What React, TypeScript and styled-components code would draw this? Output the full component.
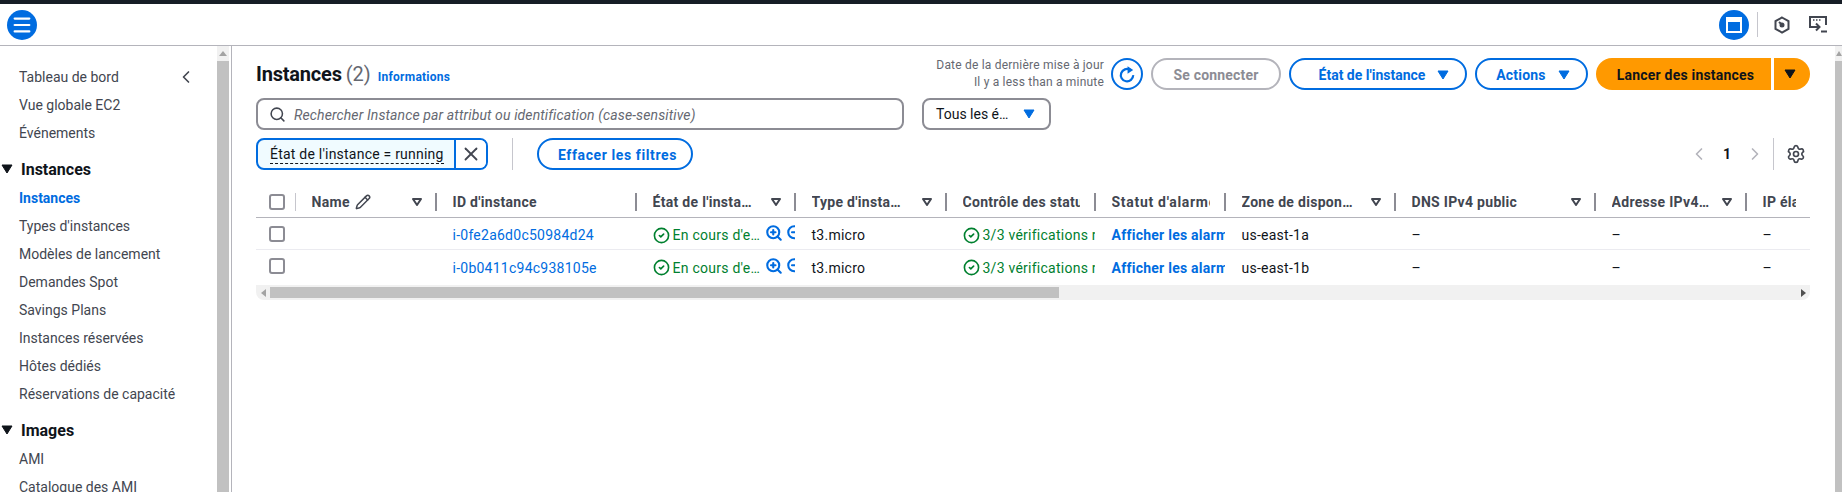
import React from 'react'
import styled, { createGlobalStyle } from 'styled-components'
import { ChevronLeft, ChevronRight, CircleCheck, Menu, Pencil, Search, Settings, X, ZoomIn, ZoomOut } from 'lucide-react'

const BLUE = '#006ce0'
const FONT = 'Roboto, "Noto Sans", sans-serif'
const COLUMNS = '39px 141px 200px 159px 151px 149px 130px 170px 200px 151px 64px'

const GlobalStyle = createGlobalStyle`
  html, body {
    margin: 0;
    height: 100%;
    overflow: hidden;
    background: #fff;
    font-family: ${FONT};
    font-size: 14px;
    color: #0f141a;
  }
  * { box-sizing: border-box; }
`

const Page = styled.div`
  display: flex;
  flex-direction: column;
  height: 100vh;
`

const TopStrip = styled.div`
  height: 4px;
  background: #161d26;
`

const Header = styled.header`
  display: flex;
  align-items: center;
  justify-content: space-between;
  height: 42px;
  padding: 0 15px 0 7px;
  border-bottom: 1px solid #b4b4bb;
`

const RoundButton = styled.div`
  display: flex;
  align-items: center;
  justify-content: center;
  width: 30px;
  height: 30px;
  border-radius: 50%;
  background: ${BLUE};
  color: #fff;
`

const HeaderTools = styled.div`
  display: flex;
  align-items: center;
`

const HeaderDivider = styled.div`
  width: 1px;
  height: 25px;
  margin: 0 16px 0 8px;
  background: #c6c6cd;
`

const ToolIcon = styled.svg`
  display: block;
  margin-right: 19px;
  &:last-child { margin-right: 0; }
`

const Body = styled.div`
  display: flex;
  flex: 1;
  min-height: 0;
`

const Sidebar = styled.nav`
  display: flex;
  flex-direction: column;
  width: 217px;
  padding-top: 17px;
  overflow: hidden;
`

const NavItem = styled.div<{ $active?: boolean }>`
  display: flex;
  align-items: center;
  justify-content: space-between;
  flex: none;
  height: 28px;
  padding: 0 21px 0 19px;
  color: ${p => (p.$active ? BLUE : '#424650')};
  font-weight: ${p => (p.$active ? 700 : 400)};
  white-space: nowrap;
`

const NavSection = styled.div`
  display: flex;
  align-items: center;
  flex: none;
  height: 30px;
  margin-top: 7px;
  padding-left: 1px;
  font-size: 16px;
  font-weight: 700;
  color: #0f141a;
  gap: 8px;
`

const Scrollbar = styled.div<{ $width: number }>`
  display: flex;
  flex-direction: column;
  flex: none;
  width: ${p => p.$width}px;
  background: #f1f1f1;
`

const ScrollCap = styled.div`
  display: flex;
  justify-content: center;
  flex: none;
  height: 15px;
  padding-top: 5px;
`

const ScrollThumb = styled.div`
  flex: 1;
  background: #c1c1c1;
`

const Main = styled.main`
  display: flex;
  flex: 1;
  flex-direction: column;
  min-width: 0;
  margin-left: 2px;
  padding: 12px 25px 0 24px;
  border-left: 1px solid #b4b4bb;
`

const Row = styled.div`
  display: flex;
  align-items: center;
  flex: none;
  height: 32px;
`

const TitleRow = styled(Row)`
  justify-content: space-between;
`

const TitleGroup = styled.div`
  display: flex;
  align-items: baseline;
`

const Title = styled.h1`
  margin: 0;
  font-size: 20px;
  font-weight: 700;
  letter-spacing: -0.2px;
  color: #0f141a;
`

const Count = styled.span`
  margin-left: 4px;
  font-size: 20px;
  color: #656871;
`

const InfoLink = styled.a`
  margin-left: 7px;
  font-size: 12px;
  font-weight: 700;
  letter-spacing: 0.25px;
  color: ${BLUE};
`

const Actions = styled.div`
  display: flex;
  align-items: center;
  gap: 8px;
`

const UpdatedAt = styled.div`
  font-size: 12px;
  line-height: 17px;
  letter-spacing: 0.2px;
  text-align: right;
  color: #656871;
  white-space: nowrap;
`

const Pill = styled.button<{ $disabled?: boolean; $width?: number; $tracking?: number; $inset?: number }>`
  display: flex;
  align-items: center;
  justify-content: center;
  gap: 12px;
  width: ${p => (p.$width ? `${p.$width}px` : 'auto')};
  height: 32px;
  padding: 1px 0 0 ${p => p.$inset ?? 0}px;
  border: 2px solid ${p => (p.$disabled ? '#b4b4bb' : BLUE)};
  border-radius: 16px;
  background: #fff;
  color: ${p => (p.$disabled ? '#8c8c94' : BLUE)};
  font: 700 14px ${FONT};
  letter-spacing: ${p => p.$tracking ?? 0.2}px;
`

const RefreshButton = styled(Pill)`
  width: 32px;
  margin-left: -1px;
  padding: 0;
`

const SplitButton = styled.div`
  display: flex;
  gap: 3px;
`

const PrimaryStart = styled.button`
  width: 175px;
  height: 32px;
  padding: 1px 0 0 4px;
  border: 0;
  border-radius: 16px 0 0 16px;
  background: #ff9900;
  color: #0f141a;
  font: 700 14px ${FONT};
  letter-spacing: 0.2px;
`

const PrimaryEnd = styled(PrimaryStart)`
  display: flex;
  align-items: center;
  justify-content: center;
  width: 36px;
  padding: 0 4px 0 0;
  border-radius: 0 16px 16px 0;
`

const SearchRow = styled(Row)`
  gap: 18px;
  margin-top: 8px;
`

const SearchBox = styled.div`
  display: flex;
  align-items: center;
  gap: 8px;
  width: 648px;
  height: 32px;
  padding-left: 11px;
  border: 2px solid #8c8c94;
  border-radius: 8px;
  color: #424650;
`

const Placeholder = styled.span`
  padding-top: 1px;
  font-style: italic;
  letter-spacing: 0.12px;
  color: #656871;
`

const SelectBox = styled.div`
  display: flex;
  align-items: center;
  justify-content: space-between;
  width: 129px;
  height: 32px;
  padding: 0 14px 0 12px;
  border: 2px solid #8c8c94;
  border-radius: 8px;
`

const FilterRow = styled(Row)`
  margin-top: 8px;
`

const Token = styled.div`
  display: flex;
  align-items: stretch;
  width: 232px;
  height: 32px;
  border: 2px solid ${BLUE};
  border-radius: 8px;
  background: #f0fbff;
  overflow: hidden;
`

const TokenLabel = styled.div`
  display: flex;
  align-items: center;
  flex: 1;
  padding: 1px 0 0 12px;
  border-right: 2px solid ${BLUE};
  white-space: nowrap;
`

const TokenText = styled.span`
  line-height: 17px;
  letter-spacing: 0.22px;
  border-bottom: 1px dashed #0f141a;
`

const TokenRemove = styled.div`
  display: flex;
  align-items: center;
  justify-content: center;
  width: 30px;
  background: #fff;
  color: #424650;
`

const VerticalRule = styled.div`
  width: 1px;
  height: 32px;
  margin: 0 24px;
  background: #c6c6cd;
`

const Pagination = styled.div`
  display: flex;
  align-items: center;
  margin-left: auto;
  padding-right: 4px;
  color: #b4b4bb;
`

const PageNumber = styled.span`
  width: 36px;
  text-align: center;
  font-weight: 700;
  color: #0f141a;
`

const PagerRule = styled(VerticalRule)`
  margin: 0 12px 0 8px;
`

const GearWrap = styled.div`
  display: flex;
  color: #424650;
`

const Table = styled.div`
  margin-top: 16px;
  overflow: hidden;
`

const TableRow = styled.div<{ $head?: boolean }>`
  display: grid;
  grid-template-columns: ${COLUMNS};
  height: 32px;
  border-bottom: 1px solid ${p => (p.$head ? '#b4b4bb' : '#ebebf0')};
  &:last-child { border-bottom: 0; }
`

const HeadCell = styled.div`
  display: flex;
  align-items: center;
  min-width: 0;
  padding-left: 16.5px;
  font-weight: 700;
  letter-spacing: 0.3px;
  color: #424650;
  white-space: nowrap;
`

const HeadLabel = styled.div<{ $tight?: boolean }>`
  display: flex;
  align-items: center;
  flex: 1;
  gap: 5px;
  min-width: 0;
  overflow: hidden;
  padding-right: ${p => (p.$tight ? 6 : 14)}px;
`

const HeadText = styled.span<{ $max?: number; $tracking?: number }>`
  max-width: ${p => (p.$max ? `${p.$max}px` : 'none')};
  overflow: hidden;
  text-overflow: ${p => (p.$max ? 'ellipsis' : 'clip')};
  letter-spacing: ${p => p.$tracking ?? 0.3}px;
`

const Separator = styled.div<{ $light?: boolean }>`
  flex: none;
  width: ${p => (p.$light ? 1 : 2)}px;
  height: 18px;
  margin-right: -1px;
  background: ${p => (p.$light ? '#c6c6cd' : '#8c8c94')};
`

const FilterIcon = styled.svg`
  flex: none;
  margin-right: 13px;
`

const CheckCell = styled.div`
  display: flex;
  align-items: center;
  justify-content: space-between;
  padding-left: 13px;
`

const Checkbox = styled.div`
  width: 16px;
  height: 16px;
  border: 2px solid #8c8c94;
  border-radius: 3px;
`

const Cell = styled.div<{ $link?: boolean; $bold?: boolean; $green?: boolean }>`
  display: flex;
  align-items: center;
  gap: 3px;
  min-width: 0;
  padding: 3px 0 0 16.5px;
  overflow: hidden;
  white-space: nowrap;
  letter-spacing: 0.25px;
  color: ${p => (p.$link ? BLUE : p.$green ? '#00802f' : '#0f141a')};
  font-weight: ${p => (p.$bold ? 700 : 400)};
  svg { flex: none; }
`

const StatusText = styled.span`
  flex: none;
  width: 88px;
  overflow: hidden;
  text-overflow: ellipsis;
`

const ActionIcons = styled.div`
  display: flex;
  flex: none;
  gap: 3px;
  margin: -4px 0 0 1px;
  color: ${BLUE};
`

const HorizontalTrack = styled.div`
  display: flex;
  align-items: center;
  height: 15px;
  margin-top: 3px;
  border-radius: 0 0 8px 8px;
  background: #f1f1f1;
`

const TrackArrow = styled.div`
  display: flex;
  align-items: center;
  justify-content: center;
  flex: none;
  width: 14px;
`

const TrackThumb = styled.div`
  flex: none;
  width: 789px;
  height: 11px;
  background: #c1c1c1;
`

const TrackSpacer = styled.div`
  flex: 1;
`

const Caret: React.FC<{ color: string }> = ({ color }) => (
  <svg width="12" height="10" viewBox="0 0 12 10">
    <path d="M1 1h10L6 9z" fill={color} stroke={color} strokeWidth="1" strokeLinejoin="round" />
  </svg>
)

const FilterCaret: React.FC = () => (
  <FilterIcon width="10" height="8" viewBox="0 0 10 8">
    <path d="M1 1h8L5 7z" fill="none" stroke="#424650" strokeWidth="2" strokeLinejoin="round" />
  </FilterIcon>
)

const WindowIcon: React.FC = () => (
  <svg width="16" height="16" viewBox="0 0 16 16">
    <rect x="1" y="1" width="14" height="14" fill="none" stroke="#fff" strokeWidth="2" />
    <rect x="2" y="2" width="12" height="3" fill="#fff" />
  </svg>
)

const RefreshIcon: React.FC = () => (
  <svg width="18" height="18" viewBox="0 0 16 16" fill="none">
    <path d="M10.8 4.3A5.5 5.5 0 1 0 13.5 9" stroke={BLUE} strokeWidth="2" />
    <path d="M8.5 1l5 3.4-5 3.4z" fill={BLUE} />
  </svg>
)

const navTop = ['Vue globale EC2', 'Événements']
const navInstances = ['Types d\'instances', 'Modèles de lancement', 'Demandes Spot', 'Savings Plans', 'Instances réservées', 'Hôtes dédiés', 'Réservations de capacité']

const headers: { label: string; filter: boolean; max?: number; tracking?: number }[] = [
  { label: "ID d'instance", filter: false },
  { label: "État de l'instance", filter: true, max: 103 },
  { label: "Type d'instance", filter: true, max: 93 },
  { label: 'Contrôle des statuts', filter: false },
  { label: "Statut d'alarme", filter: false, tracking: 0.7 },
  { label: 'Zone de disponibilité', filter: true, max: 113 },
  { label: 'DNS IPv4 public', filter: true },
  { label: 'Adresse IPv4 publique', filter: true, max: 100 },
]

const instances = [
  { id: 'i-0fe2a6d0c50984d24', zone: 'us-east-1a' },
  { id: 'i-0b0411c94c938105e', zone: 'us-east-1b' },
]

const App: React.FC = () => (
  <Page>
    <GlobalStyle />
    <TopStrip />
    <Header>
      <RoundButton><Menu size={22} strokeWidth={2.4} /></RoundButton>
      <HeaderTools>
        <RoundButton><WindowIcon /></RoundButton>
        <HeaderDivider />
        <ToolIcon width="16" height="18" viewBox="0 0 16 18" fill="none" stroke="#424650" strokeWidth="2">
          <path d="M8 1.5l6.500 3.700v7.600L8 16.500l-6.500-3.700V5.200z" />
          <path d="M5 6l3.500 3" />
          <circle cx="8" cy="9" r="2.500" fill="#424650" stroke="none" />
        </ToolIcon>
        <ToolIcon width="18" height="17" viewBox="0 0 18 17" fill="none" stroke="#424650" strokeWidth="2">
          <path d="M4 11H1V1h16v8" />
          <path d="M4 4h1.500M7 4h1.500M10 4h1.500" strokeWidth="1.600" />
          <path d="M7 7.500l3.500 3.500L7 14.500M3 11h7M12 15.500h6" />
        </ToolIcon>
      </HeaderTools>
    </Header>
    <Body>
      <Sidebar>
        <NavItem>Tableau de bord<ChevronLeft size={20} color="#424650" /></NavItem>
        {navTop.map(item => <NavItem key={item}>{item}</NavItem>)}
        <NavSection><Caret color="#0f141a" />Instances</NavSection>
        <NavItem $active>Instances</NavItem>
        {navInstances.map(item => <NavItem key={item}>{item}</NavItem>)}
        <NavSection><Caret color="#0f141a" />Images</NavSection>
        <NavItem>AMI</NavItem>
        <NavItem>Catalogue des AMI</NavItem>
      </Sidebar>
      <Scrollbar $width={12}>
        <ScrollCap>
          <svg width="8" height="5" viewBox="0 0 8 5"><path d="M0 5l4-5 4 5z" fill="#a3a3a3" /></svg>
        </ScrollCap>
        <ScrollThumb />
      </Scrollbar>
      <Main>
        <TitleRow>
          <TitleGroup>
            <Title>Instances</Title>
            <Count>(2)</Count>
            <InfoLink>Informations</InfoLink>
          </TitleGroup>
          <Actions>
            <UpdatedAt>
              Date de la dernière mise à jour
              <br />
              Il y a less than a minute
            </UpdatedAt>
            <RefreshButton><RefreshIcon /></RefreshButton>
            <Pill $disabled $width={130}>Se connecter</Pill>
            <Pill $width={178} $tracking={0} $inset={12}>État de l'instance<Caret color={BLUE} /></Pill>
            <Pill $width={113} $inset={3}>Actions<Caret color={BLUE} /></Pill>
            <SplitButton>
              <PrimaryStart>Lancer des instances</PrimaryStart>
              <PrimaryEnd><Caret color="#0f141a" /></PrimaryEnd>
            </SplitButton>
          </Actions>
        </TitleRow>
        <SearchRow>
          <SearchBox>
            <Search size={17} strokeWidth={2.2} />
            <Placeholder>Rechercher Instance par attribut ou identification (case-sensitive)</Placeholder>
          </SearchBox>
          <SelectBox>Tous les é…<Caret color={BLUE} /></SelectBox>
        </SearchRow>
        <FilterRow>
          <Token>
            <TokenLabel><TokenText>État de l'instance = running</TokenText></TokenLabel>
            <TokenRemove><X size={22} strokeWidth={2} /></TokenRemove>
          </Token>
          <VerticalRule />
          <Pill $width={156} $tracking={0.6} $inset={5}>Effacer les filtres</Pill>
          <Pagination>
            <ChevronLeft size={20} strokeWidth={2} />
            <PageNumber>1</PageNumber>
            <ChevronRight size={20} strokeWidth={2} />
            <PagerRule />
            <GearWrap><Settings size={20} strokeWidth={2} /></GearWrap>
          </Pagination>
        </FilterRow>
        <Table>
          <TableRow $head>
            <CheckCell><Checkbox /><Separator $light /></CheckCell>
            <HeadCell>
              <HeadLabel>Name<Pencil size={16} strokeWidth={2.2} /></HeadLabel>
              <FilterCaret />
              <Separator />
            </HeadCell>
            {headers.map(col => (
              <HeadCell key={col.label}>
                <HeadLabel $tight={col.filter}>
                  <HeadText $max={col.max} $tracking={col.tracking}>{col.label}</HeadText>
                </HeadLabel>
                {col.filter && <FilterCaret />}
                <Separator />
              </HeadCell>
            ))}
            <HeadCell><HeadLabel><HeadText>IP élastique</HeadText></HeadLabel></HeadCell>
          </TableRow>
          {instances.map(instance => (
            <TableRow key={instance.id}>
              <CheckCell><Checkbox /></CheckCell>
              <Cell />
              <Cell $link>{instance.id}</Cell>
              <Cell $green>
                <CircleCheck size={17} strokeWidth={2.3} />
                <StatusText>En cours d'exécution</StatusText>
                <ActionIcons>
                  <ZoomIn size={18} strokeWidth={2.8} />
                  <ZoomOut size={18} strokeWidth={2.8} />
                </ActionIcons>
              </Cell>
              <Cell>t3.micro</Cell>
              <Cell $green>
                <CircleCheck size={17} strokeWidth={2.3} />
                3/3 vérifications réussies
              </Cell>
              <Cell $link $bold>Afficher les alarmes</Cell>
              <Cell>{instance.zone}</Cell>
              <Cell>–</Cell>
              <Cell>–</Cell>
              <Cell>–</Cell>
            </TableRow>
          ))}
        </Table>
        <HorizontalTrack>
          <TrackArrow>
            <svg width="5" height="8" viewBox="0 0 5 8"><path d="M5 0L0 4l5 4z" fill="#a3a3a3" /></svg>
          </TrackArrow>
          <TrackThumb />
          <TrackSpacer />
          <TrackArrow>
            <svg width="5" height="8" viewBox="0 0 5 8"><path d="M0 0l5 4-5 4z" fill="#505050" /></svg>
          </TrackArrow>
        </HorizontalTrack>
      </Main>
      <Scrollbar $width={7}>
        <ScrollCap>
          <svg width="6" height="5" viewBox="0 0 6 5"><path d="M0 5l3-5 3 5z" fill="#a3a3a3" /></svg>
        </ScrollCap>
        <ScrollThumb />
      </Scrollbar>
    </Body>
  </Page>
)

export default App
